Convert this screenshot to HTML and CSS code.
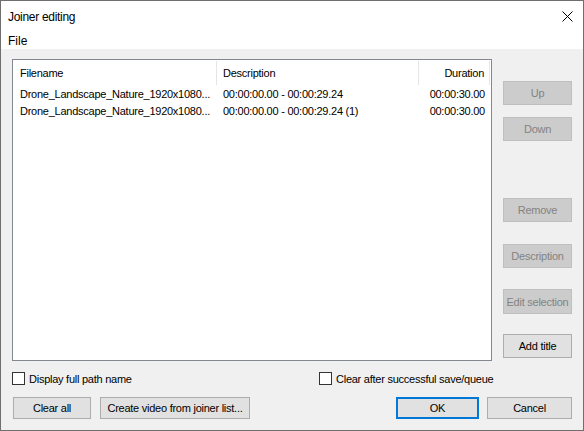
FILE: index.html
```html
<!DOCTYPE html>
<html>
<head>
<meta charset="utf-8">
<link rel="stylesheet" href="styles.css">
</head>
<body>
<div class="window">
  <div class="titlebar">
    <span class="title">Joiner editing</span>
    <svg class="close" width="11" height="11" viewBox="0 0 11 11"><path d="M0.5 0.5 L10.5 10.5 M10.5 0.5 L0.5 10.5" stroke="#000" stroke-width="1" fill="none"/></svg>
  </div>
  <div class="menubar"><span class="menu-item">File</span></div>
  <div class="client">
    <div class="main">
      <div class="listbox">
        <div class="row header">
          <div class="col c1">Filename</div>
          <div class="col c2">Description</div>
          <div class="col c3">Duration</div>
        </div>
        <div class="row">
          <div class="col c1">Drone_Landscape_Nature_1920x1080...</div>
          <div class="col c2">00:00:00.00 - 00:00:29.24</div>
          <div class="col c3">00:00:30.00</div>
        </div>
        <div class="row">
          <div class="col c1">Drone_Landscape_Nature_1920x1080...</div>
          <div class="col c2">00:00:00.00 - 00:00:29.24 (1)</div>
          <div class="col c3">00:00:30.00</div>
        </div>
      </div>
      <div class="side">
        <div class="btn disabled b-up">Up</div>
        <div class="btn disabled b-down">Down</div>
        <div class="btn disabled b-remove">Remove</div>
        <div class="btn disabled b-desc">Description</div>
        <div class="btn disabled b-edit">Edit selection</div>
        <div class="btn b-add">Add title</div>
      </div>
    </div>
    <div class="checks">
      <label class="check c-path"><span class="box"></span>Display full path name</label>
      <label class="check c-clear"><span class="box"></span>Clear after successful save/queue</label>
    </div>
    <div class="bottom">
      <div class="btn b-clear">Clear all</div>
      <div class="btn b-create">Create video from joiner list...</div>
      <div class="spacer"></div>
      <div class="btn default b-ok">OK</div>
      <div class="btn b-cancel">Cancel</div>
    </div>
  </div>
</div>
</body>
</html>
```

FILE: styles.css
```css
html, body {
  margin: 0;
  padding: 0;
}
body {
  width: 584px;
  height: 431px;
  font-family: "Liberation Sans", Arial, sans-serif;
  font-size: 11px;
  letter-spacing: -0.25px;
  color: #000;
  background: #fff;
}
.window {
  width: 584px;
  height: 431px;
  box-sizing: border-box;
  border: 1px solid #6f6f6f;
  display: flex;
  flex-direction: column;
}
.titlebar {
  height: 30px;
  background: #fff;
  display: flex;
  align-items: center;
  padding-left: 7px;
  padding-right: 10px;
}
.title {
  flex: 1;
  font-family: "Liberation Sans", Arial, sans-serif;
  font-size: 12px;
  letter-spacing: -0.3px;
  margin-top: 1px;
}
.close {
  display: block;
}
.menubar {
  height: 18px;
  background: #fff;
  display: flex;
  align-items: center;
  padding-left: 7px;
}
.menu-item {
  font-family: "Liberation Sans", Arial, sans-serif;
  font-size: 12px;
  letter-spacing: 0;
  margin-top: 2px;
}
.client {
  flex: 1;
  background: #f0f0f0;
  padding: 10px 10px 0 11px;
}
.main {
  display: flex;
  gap: 11px;
}
.listbox {
  width: 480px;
  height: 302px;
  box-sizing: border-box;
  border: 1px solid #828790;
  background: #fff;
}
.row {
  display: flex;
  height: 17px;
  align-items: center;
  white-space: nowrap;
}
.row.header {
  height: 25px;
}
.col {
  box-sizing: border-box;
  overflow: hidden;
}
.c1 {
  width: 204px;
  padding-left: 7px;
}
.c2 {
  width: 202px;
  padding-left: 6px;
}
.c3 {
  width: 71px;
  padding-right: 5px;
  text-align: right;
}
.header .col {
  height: 24px;
  line-height: 24px;
  margin-top: 1px;
}
.header .c1,
.header .c2,
.header .c3 {
  border-right: 1px solid #e5e5e5;
}
.side {
  width: 69px;
  display: flex;
  flex-direction: column;
}
.btn {
  box-sizing: border-box;
  height: 24px;
  border: 1px solid #adadad;
  background: #e1e1e1;
  display: flex;
  align-items: center;
  justify-content: center;
  white-space: nowrap;
}
.btn.disabled {
  background: #cccccc;
  border-color: #bfbfbf;
  color: #838383;
}
.b-up { margin-top: 22px; }
.b-down { margin-top: 12px; }
.b-remove { margin-top: 57px; }
.b-desc { margin-top: 22px; }
.b-edit { margin-top: 21px; height: 25px; }
.b-add { margin-top: 20px; }
.checks {
  display: flex;
  margin-top: 11px;
  height: 13px;
}
.check {
  display: flex;
  align-items: center;
  height: 13px;
}
.box {
  width: 13px;
  height: 13px;
  box-sizing: border-box;
  border: 1px solid #333;
  background: #fff;
  margin-right: 4px;
}
.c-path {
  width: 307px;
}
.bottom {
  display: flex;
  margin-top: 12px;
  padding-left: 1px;
}
.bottom .btn {
  height: 22px;
}
.b-clear { width: 78px; }
.b-create { width: 150px; margin-left: 9px; }
.spacer { flex: 1; }
.b-ok {
  width: 83px;
  border: 2px solid #0078d7;
}
.b-cancel {
  width: 85px;
  margin-left: 8px;
  margin-right: 1px;
}
```
